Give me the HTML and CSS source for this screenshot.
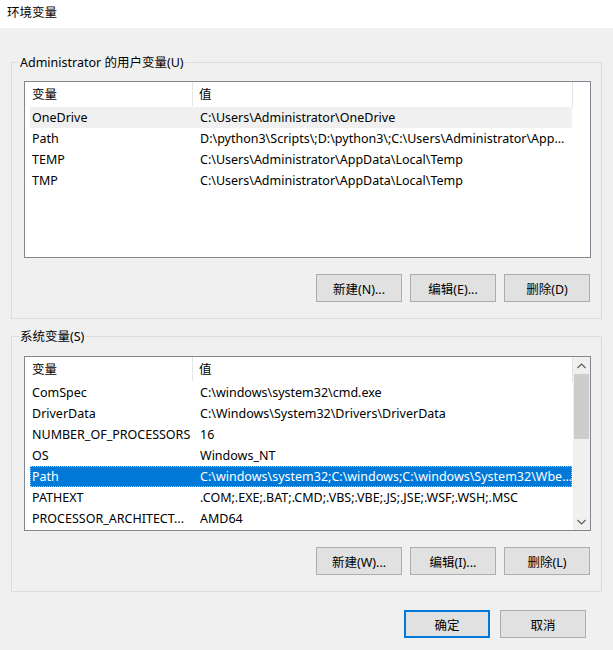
FILE: index.html
```html
<!DOCTYPE html>
<html lang="zh-CN">
<head>
<meta charset="utf-8">
<title>环境变量</title>
<link rel="stylesheet" href="styles.css">
</head>
<body>
<div class="window">
  <div class="titlebar">环境变量</div>
  <div class="content">
    <div class="group group-user">
      <div class="legend">Administrator 的用户变量(U)</div>
      <div class="list">
        <div class="list-main">
          <div class="header">
            <div class="h1">变量</div>
            <div class="h2">值</div>
          </div>
          <div class="row hover"><div class="c1">OneDrive</div><div class="c2">C:\Users\Administrator\OneDrive</div></div>
          <div class="row"><div class="c1">Path</div><div class="c2">D:\python3\Scripts\;D:\python3\;C:\Users\Administrator\App...</div></div>
          <div class="row"><div class="c1">TEMP</div><div class="c2">C:\Users\Administrator\AppData\Local\Temp</div></div>
          <div class="row"><div class="c1">TMP</div><div class="c2">C:\Users\Administrator\AppData\Local\Temp</div></div>
        </div>
      </div>
      <div class="buttons">
        <button class="btn">新建(N)...</button>
        <button class="btn">编辑(E)...</button>
        <button class="btn">删除(D)</button>
      </div>
    </div>

    <div class="group group-sys">
      <div class="legend">系统变量(S)</div>
      <div class="list list-sys">
        <div class="list-main">
          <div class="header">
            <div class="h1">变量</div>
            <div class="h2">值</div>
          </div>
          <div class="row"><div class="c1">ComSpec</div><div class="c2">C:\windows\system32\cmd.exe</div></div>
          <div class="row"><div class="c1">DriverData</div><div class="c2">C:\Windows\System32\Drivers\DriverData</div></div>
          <div class="row"><div class="c1">NUMBER_OF_PROCESSORS</div><div class="c2">16</div></div>
          <div class="row"><div class="c1">OS</div><div class="c2">Windows_NT</div></div>
          <div class="row selected"><div class="c1">Path</div><div class="c2">C:\windows\system32;C:\windows;C:\windows\System32\Wbe...</div></div>
          <div class="row"><div class="c1">PATHEXT</div><div class="c2">.COM;.EXE;.BAT;.CMD;.VBS;.VBE;.JS;.JSE;.WSF;.WSH;.MSC</div></div>
          <div class="row"><div class="c1">PROCESSOR_ARCHITECT...</div><div class="c2">AMD64</div></div>
        </div>
        <div class="scrollbar">
          <div class="arrow">
            <svg width="9" height="6" viewBox="0 0 9 6"><path d="M0.5 5 L4.5 1 L8.5 5" fill="none" stroke="#606060" stroke-width="1.2"/></svg>
          </div>
          <div class="track"><div class="thumb"></div></div>
          <div class="arrow">
            <svg width="9" height="6" viewBox="0 0 9 6"><path d="M0.5 1 L4.5 5 L8.5 1" fill="none" stroke="#606060" stroke-width="1.2"/></svg>
          </div>
        </div>
      </div>
      <div class="buttons">
        <button class="btn">新建(W)...</button>
        <button class="btn">编辑(I)...</button>
        <button class="btn">删除(L)</button>
      </div>
    </div>

    <div class="dialog-buttons">
      <button class="btn btn-default">确定</button>
      <button class="btn">取消</button>
    </div>
  </div>
</div>
</body>
</html>
```

FILE: styles.css
```css
* { box-sizing: border-box; }
html, body {
  margin: 0;
  padding: 0;
}
body {
  width: 613px;
  height: 650px;
  background: #f0f0f0;
  font-family: "Noto Sans", "Noto Sans CJK SC", sans-serif;
  font-size: 12.5px;
  color: #000;
  overflow: hidden;
}
.window {
  width: 613px;
  height: 650px;
  display: flex;
  flex-direction: column;
}
.titlebar {
  height: 28px;
  background: #fff;
  padding-left: 7px;
  line-height: 26px;
}
.content {
  padding: 34px 11px 0 11px;
  display: flex;
  flex-direction: column;
}
.group {
  border: 1px solid #dcdcdc;
  padding: 0 11px 16px 12px;
}
.group-sys {
  margin-top: 17px;
}
.legend {
  width: fit-content;
  margin: -8px 0 0 -5px;
  padding: 0 1px;
  background: #f0f0f0;
  line-height: 16px;
  height: 16px;
}
.list {
  margin-top: 10px;
  width: 567px;
  height: 177px;
  border: 1px solid #828790;
  background: #fff;
  display: flex;
  overflow: hidden;
}
.list-sys {
  margin-top: 11px;
  height: 175px;
}
.list-main {
  flex: 1;
  display: flex;
  flex-direction: column;
}
.header {
  display: flex;
  height: 25px;
  width: 548px;
  line-height: 25px;
  border-right: 1px solid #e5e5e5;
}
.h1 {
  width: 168px;
  padding-left: 7px;
  border-right: 1px solid #e5e5e5;
  margin: 0 0 1px 0;
}
.h2 {
  flex: 1;
  padding-left: 6px;
}
.row {
  display: flex;
  height: 21px;
  line-height: 21px;
  margin-left: 5px;
  width: 542px;
  white-space: nowrap;
}
.row.hover {
  background: #f0f0f0;
}
.row.selected {
  background: #0078d7;
  color: #fff;
  outline: 1px dotted #99c9ef;
  outline-offset: -1px;
}
.c1 {
  width: 163px;
  padding-left: 2px;
  overflow: hidden;
}
.c2 {
  flex: 1;
  padding-left: 7px;
  overflow: hidden;
}
.scrollbar {
  width: 17px;
  background: #f0f0f0;
  display: flex;
  flex-direction: column;
}
.arrow {
  height: 17px;
  display: flex;
  align-items: center;
  justify-content: center;
}
.track {
  flex: 1;
  padding: 0 1px;
}
.thumb {
  height: 65px;
  background: #cdcdcd;
}
.buttons {
  display: flex;
  justify-content: flex-end;
  gap: 8px;
  margin-top: 16px;
}
.btn {
  width: 86px;
  height: 28px;
  background: #e1e1e1;
  border: 1px solid #adadad;
  font-family: "Noto Sans", "Noto Sans CJK SC", sans-serif;
  font-size: 12.5px;
  color: #000;
  padding: 0;
  margin: 0;
}
.dialog-buttons {
  display: flex;
  justify-content: flex-end;
  gap: 10px;
  margin-top: 18px;
  padding-right: 16px;
}
.btn-default {
  border: 2px solid #0078d7;
}
```
